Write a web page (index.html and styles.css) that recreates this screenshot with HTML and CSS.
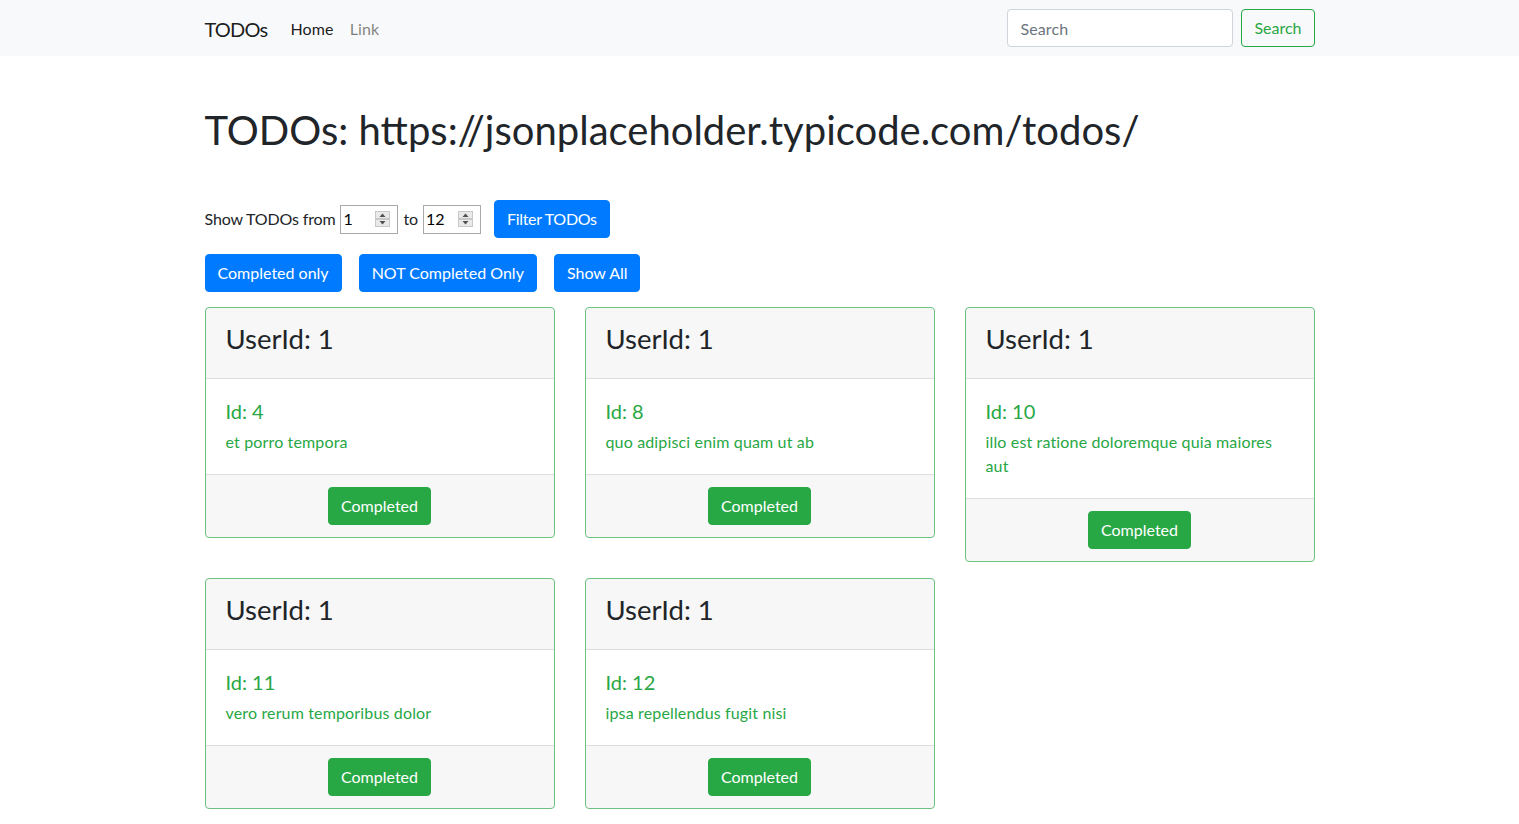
FILE: index.html
```html
<!DOCTYPE html>
<html lang="en">
<head>
<meta charset="utf-8">
<title>TODOs</title>
<link rel="stylesheet" href="styles.css">
</head>
<body>
<nav class="navbar">
  <div class="container nav-inner">
    <a class="brand" href="#">TODOs</a>
    <ul class="nav">
      <li><a class="nav-link active" href="#">Home</a></li>
      <li><a class="nav-link" href="#">Link</a></li>
    </ul>
    <form class="search-form">
      <input class="form-control search-input" type="text" placeholder="Search">
      <button class="btn btn-outline-success" type="button">Search</button>
    </form>
  </div>
</nav>

<main class="container">
  <h1 class="title">TODOs: https://jsonplaceholder.typicode.com/todos/</h1>

  <div class="filter-row">
    <span class="filter-label">Show TODOs from</span>
    <span class="num"><input class="num-input" type="text" value="1"><svg class="spin" width="15" height="16" viewBox="0 0 15 16"><rect x="0.5" y="0.5" width="14" height="7" fill="#e9e9e9" stroke="#c8c8c8"/><rect x="0.5" y="8.5" width="14" height="7" fill="#e9e9e9" stroke="#c8c8c8"/><path d="M4.5 6 L7.5 2.5 L10.5 6 Z" fill="#505050"/><path d="M4.5 10 L7.5 13.5 L10.5 10 Z" fill="#505050"/></svg></span>
    <span class="filter-label">to</span>
    <span class="num"><input class="num-input" type="text" value="12"><svg class="spin" width="15" height="16" viewBox="0 0 15 16"><rect x="0.5" y="0.5" width="14" height="7" fill="#e9e9e9" stroke="#c8c8c8"/><rect x="0.5" y="8.5" width="14" height="7" fill="#e9e9e9" stroke="#c8c8c8"/><path d="M4.5 6 L7.5 2.5 L10.5 6 Z" fill="#505050"/><path d="M4.5 10 L7.5 13.5 L10.5 10 Z" fill="#505050"/></svg></span>
    <button class="btn btn-primary filter-btn" type="button">Filter TODOs</button>
  </div>

  <div class="btn-row">
    <button class="btn btn-primary" type="button">Completed only</button>
    <button class="btn btn-primary" type="button">NOT Completed Only</button>
    <button class="btn btn-primary" type="button">Show All</button>
  </div>

  <div class="cards">
    <div class="col">
      <div class="card">
        <div class="card-header"><h2>UserId: 1</h2></div>
        <div class="card-body">
          <h5 class="card-title">Id: 4</h5>
          <p class="card-text">et porro tempora</p>
        </div>
        <div class="card-footer"><button class="btn btn-success" type="button">Completed</button></div>
      </div>
    </div>
    <div class="col">
      <div class="card">
        <div class="card-header"><h2>UserId: 1</h2></div>
        <div class="card-body">
          <h5 class="card-title">Id: 8</h5>
          <p class="card-text">quo adipisci enim quam ut ab</p>
        </div>
        <div class="card-footer"><button class="btn btn-success" type="button">Completed</button></div>
      </div>
    </div>
    <div class="col">
      <div class="card">
        <div class="card-header"><h2>UserId: 1</h2></div>
        <div class="card-body">
          <h5 class="card-title">Id: 10</h5>
          <p class="card-text">illo est ratione doloremque quia maiores aut</p>
        </div>
        <div class="card-footer"><button class="btn btn-success" type="button">Completed</button></div>
      </div>
    </div>
    <div class="col">
      <div class="card">
        <div class="card-header"><h2>UserId: 1</h2></div>
        <div class="card-body">
          <h5 class="card-title">Id: 11</h5>
          <p class="card-text">vero rerum temporibus dolor</p>
        </div>
        <div class="card-footer"><button class="btn btn-success" type="button">Completed</button></div>
      </div>
    </div>
    <div class="col">
      <div class="card">
        <div class="card-header"><h2>UserId: 1</h2></div>
        <div class="card-body">
          <h5 class="card-title">Id: 12</h5>
          <p class="card-text">ipsa repellendus fugit nisi</p>
        </div>
        <div class="card-footer"><button class="btn btn-success" type="button">Completed</button></div>
      </div>
    </div>
  </div>
</main>
</body>
</html>
```

FILE: styles.css
```css
* { box-sizing: border-box; }

body {
  margin: 0;
  font-family: "Segoe UI", Lato, "Liberation Sans", sans-serif;
  font-size: 16px;
  line-height: 1.5;
  color: #212529;
  background: #fff;
  letter-spacing: 0.15px;
}

.container {
  width: 1140px;
  margin: 0 auto;
  padding: 0 15px;
}

/* navbar */
.navbar {
  background: #f8f9fa;
  padding: 8px 0;
  height: 56px;
}
.nav-inner {
  display: flex;
  align-items: center;
  height: 40px;
}
.brand {
  font-size: 20px;
  line-height: 30px;
  letter-spacing: -0.8px;
  color: rgba(0,0,0,.9);
  text-decoration: none;
  margin-right: 15px;
  padding-top: 2px;
}
.nav {
  list-style: none;
  margin: 0;
  padding: 0;
  display: flex;
  flex: 1;
}
.nav-link {
  display: block;
  padding: 9px 8px 7px;
  color: rgba(0,0,0,.5);
  text-decoration: none;
}
.nav-link.active { color: rgba(0,0,0,.9); }

.search-form {
  display: flex;
  align-items: center;
}
.form-control {
  height: 38px;
  padding: 6px 12px;
  font: inherit;
  letter-spacing: inherit;
  color: #495057;
  background: #fff;
  border: 1px solid #ced4da;
  border-radius: 4px;
}
.form-control::placeholder { color: #6c757d; }
.search-input {
  width: 226px;
  margin-right: 8px;
}

/* buttons */
.btn {
  display: inline-block;
  font: inherit;
  font-size: 16px;
  line-height: 24px;
  letter-spacing: 0;
  padding: 6px 12px;
  border: 1px solid transparent;
  border-radius: 4px;
  cursor: pointer;
  white-space: nowrap;
}
.btn-primary { background: #007bff; border-color: #007bff; color: #fff; }
.btn-success { background: #28a745; border-color: #28a745; color: #fff; }
.btn-outline-success { background: transparent; border-color: #28a745; color: #28a745; }

/* heading */
.title {
  font-size: 40px;
  font-weight: 400;
  line-height: 1.2;
  letter-spacing: 0;
  margin: 50px 0 46px;
}

/* filter */
.filter-row {
  display: flex;
  align-items: center;
  height: 38px;
  margin-bottom: 16px;
}
.filter-label { margin-right: 5px; letter-spacing: -0.15px; }
.num {
  display: inline-flex;
  align-items: center;
  width: 58px;
  height: 29px;
  border: 1px solid #a9a9a9;
  background: #fff;
  margin-right: 5px;
  padding: 0 7px 0 2px;
}
.num-input {
  width: 100%;
  min-width: 0;
  border: 0;
  padding: 0;
  font: inherit;
  letter-spacing: 0;
  color: #000;
  background: transparent;
  outline: none;
}
.spin { flex: none; }
.filter-btn { margin-left: 8px; letter-spacing: -0.3px; }

.btn-row {
  display: flex;
  gap: 17px;
  margin-bottom: 15px;
}

/* cards */
.cards {
  display: grid;
  grid-template-columns: repeat(3, 350px);
  column-gap: 30px;
  row-gap: 16px;
  align-items: start;
  padding-bottom: 16px;
}
.card {
  border: 1px solid #6cc27f;
  border-radius: 4px;
  background: #fff;
  overflow: hidden;
}
.card-header {
  padding: 12px 20px;
  background: rgba(0,0,0,.03);
  border-bottom: 1px solid rgba(0,0,0,.1);
}
.card-header h2 {
  margin: 0 0 8px;
  font-size: 27.5px;
  font-weight: 400;
  line-height: 38px;
  letter-spacing: 0;
}
.card-body {
  padding: 20px;
  color: #28a745;
}
.card-title {
  margin: 0 0 7px;
  font-size: 20px;
  font-weight: 400;
  line-height: 1.2;
  letter-spacing: 0;
}
.card-text { margin: 0; }
.card-footer {
  padding: 12px 20px;
  background: rgba(0,0,0,.03);
  border-top: 1px solid rgba(0,0,0,.1);
  text-align: center;
}
```
